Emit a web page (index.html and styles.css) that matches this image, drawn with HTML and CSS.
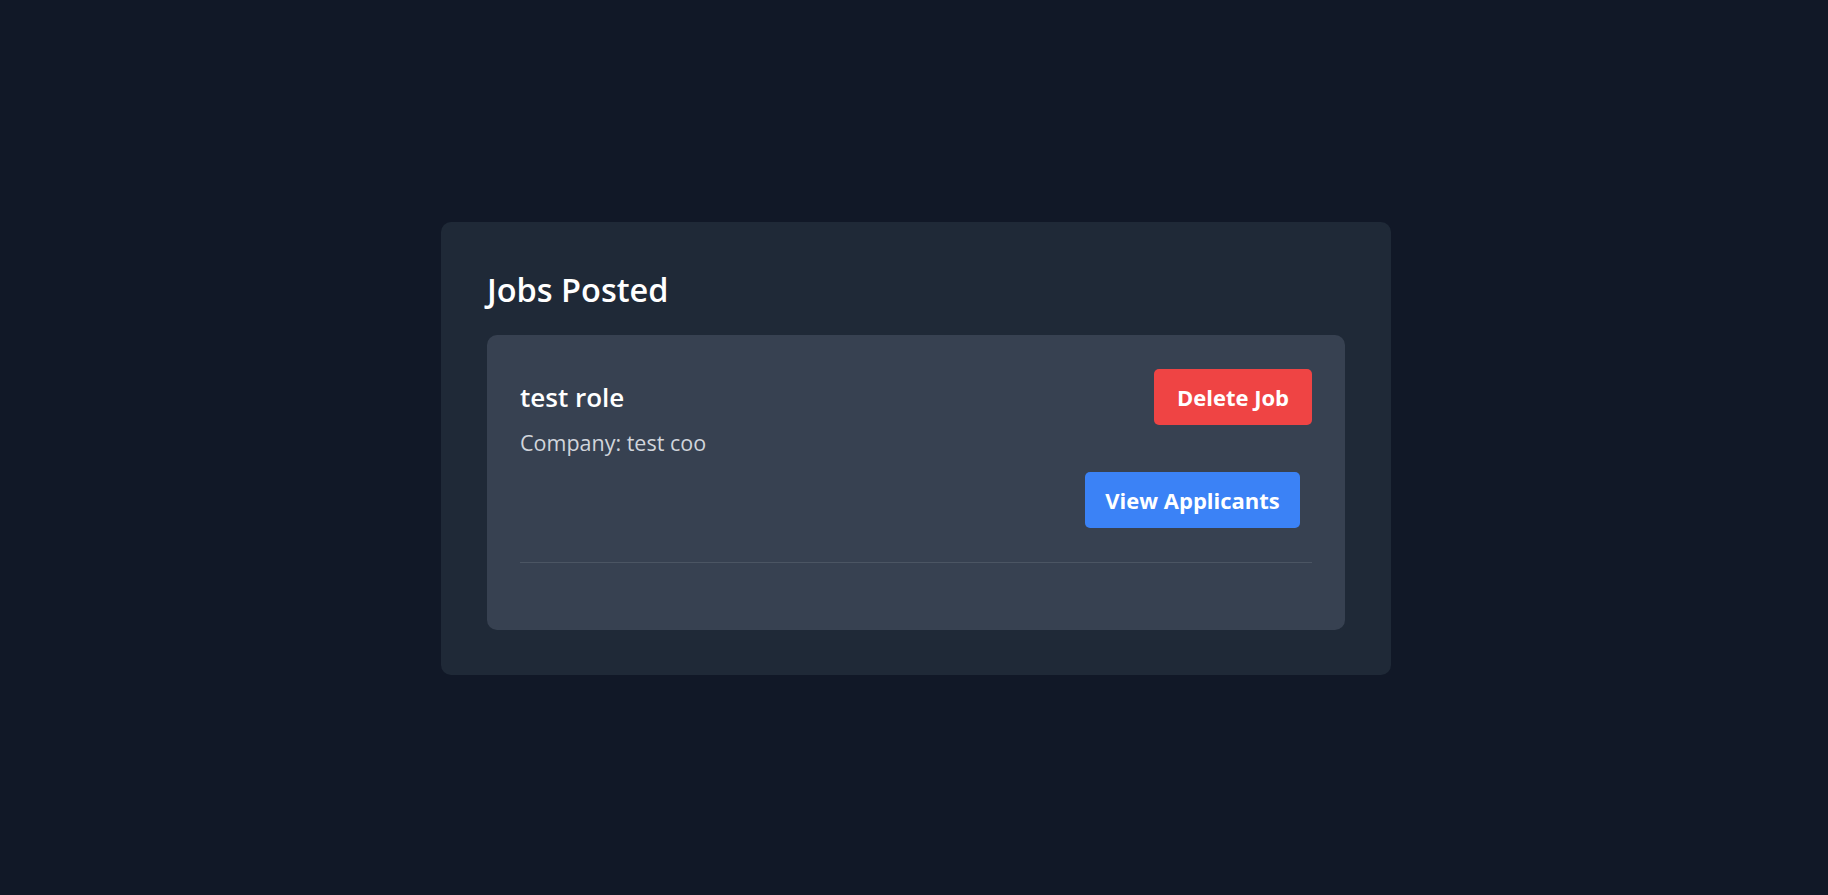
FILE: index.html
```html
<!DOCTYPE html>
<html lang="en">
<head>
<meta charset="utf-8">
<title>Jobs Posted</title>
<link rel="stylesheet" href="styles.css">
</head>
<body>
<main class="page">
  <section class="panel">
    <h2 class="panel-title">Jobs Posted</h2>
    <div class="job-list">
      <article class="job">
        <div class="job-head">
          <h3 class="job-title">test role</h3>
          <button class="btn btn-red">Delete Job</button>
        </div>
        <p class="job-company">Company: test coo</p>
        <div class="job-actions">
          <button class="btn btn-blue">View Applicants</button>
        </div>
      </article>
    </div>
  </section>
</main>
</body>
</html>
```

FILE: styles.css
```css
* { box-sizing: border-box; }
html, body { margin: 0; padding: 0; }
body {
  background: #111827;
  font-family: "Open Sans", "Noto Sans", sans-serif;
  color: #ffffff;
}
.page {
  min-height: 100vh;
  display: flex;
  align-items: center;
  justify-content: center;
  padding: 2px 0 0 4px;
}
.panel {
  width: 950px;
  background: #1f2937;
  border-radius: 10px;
  padding: 46px 46px 45px;
}
.panel-title {
  margin: 2px 0 25px;
  font-size: 32.5px;
  line-height: 40px;
  font-weight: 600;
  color: #ffffff;
}
.job-list {
  background: #374151;
  border-radius: 10px;
  padding: 34px 33px 67px;
}
.job {
  border-bottom: 1px solid #4b5563;
  padding-bottom: 34px;
}
.job-head {
  display: flex;
  justify-content: space-between;
  align-items: center;
}
.job-title {
  margin: 0;
  font-size: 26px;
  line-height: 32px;
  font-weight: 600;
  color: #ffffff;
}
.job-company {
  margin: 4px 0 0;
  font-size: 21.5px;
  line-height: 28px;
  color: #d1d5db;
}
.job-actions {
  display: flex;
  justify-content: flex-end;
  margin-top: 15px;
  padding-right: 12px;
}
.btn {
  border: 0;
  border-radius: 5px;
  height: 56px;
  padding: 0;
  font-family: inherit;
  font-size: 22px;
  font-weight: 700;
  color: #ffffff;
  cursor: pointer;
}
.btn-red { background: #ef4444; width: 158px; }
.btn-blue { background: #3b82f6; width: 215px; }
```
